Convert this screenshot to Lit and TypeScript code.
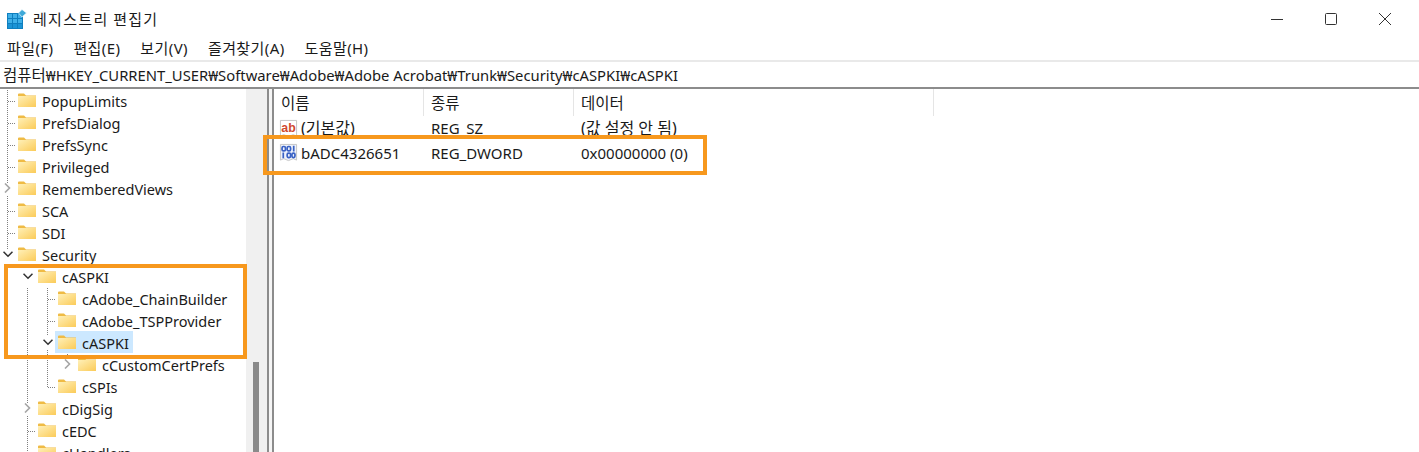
import { LitElement, html, css, svg } from "lit";
import { customElement } from "lit/decorators.js";

const ROWS: { t: string; l: number; e?: "o" | "c"; sel?: boolean }[] = [
  { t: "PopupLimits", l: 0 },
  { t: "PrefsDialog", l: 0 },
  { t: "PrefsSync", l: 0 },
  { t: "Privileged", l: 0 },
  { t: "RememberedViews", l: 0, e: "c" },
  { t: "SCA", l: 0 },
  { t: "SDI", l: 0 },
  { t: "Security", l: 0, e: "o" },
  { t: "cASPKI", l: 1, e: "o" },
  { t: "cAdobe_ChainBuilder", l: 2 },
  { t: "cAdobe_TSPProvider", l: 2 },
  { t: "cASPKI", l: 2, e: "o", sel: true },
  { t: "cCustomCertPrefs", l: 3, e: "c" },
  { t: "cSPIs", l: 2 },
  { t: "cDigSig", l: 1, e: "c" },
  { t: "cEDC", l: 1 },
  { t: "cHandlers", l: 1 },
];

const folder = html`<svg class="folder" width="18" height="14" viewBox="0 0 18 14">
  <defs><linearGradient id="fg" x1="0" y1="0" x2="1" y2="1"><stop offset="0" stop-color="#fff0b8"/><stop offset="1" stop-color="#fbcb58"/></linearGradient></defs>
  <path d="M0 1.5 Q0 .5 1 .5 H6 L8 2.5 H18 V14 H0 Z" fill="#efbb45"/>
  <rect x="0" y="3" width="18" height="11" fill="url(#fg)"/>
</svg>`;

const chevC = html`<svg class="exp" width="10" height="10" viewBox="0 0 10 10"><path d="M2 .5 L6.5 5 L2 9.5" fill="none" stroke="#a6a6a6" stroke-width="1.6"/></svg>`;
const chevO = html`<svg class="exp" width="10" height="10" viewBox="0 0 10 10"><path d="M.5 2.7 L5 7.2 L9.5 2.7" fill="none" stroke="#333" stroke-width="1.6"/></svg>`;

@customElement("app-root")
export class AppRoot extends LitElement {
  static styles = css`
    :host { display: block; width: 1419px; height: 452px; overflow: hidden; position: relative; background: #fff;
      font-family: "Noto Sans", "Noto Sans CJK KR", sans-serif; font-size: 14.5px; color: #1a1a1a; }
    .title { height: 37px; display: flex; align-items: center; }
    .appicon { margin: 0 0 0 7px; }
    .title-text { margin-left: 6px; font-size: 15px; font-family: "Noto Sans CJK KR", sans-serif; letter-spacing: 1.3px; flex: 1; }
    .wc { display: flex; margin-right: 7px; }
    .wc span { width: 54px; height: 36px; display: flex; align-items: center; justify-content: center; }
    .menu { height: 23px; box-sizing: border-box; padding-bottom: 2px; display: flex; align-items: center; padding-left: 7px; gap: 20px; font-size: 15px; letter-spacing: .4px; }
    .addr { border-top: 2px solid #e9e9e9; height: 25px; display: flex; align-items: center; padding-left: 3px; font-size: 14.8px; border-bottom: 2px solid #8c8c8c; white-space: nowrap; }
    .kr { font-size: 15.5px; }
    .main { display: flex; height: 363px; }
    .tree { width: 246px; position: relative; overflow: hidden; }
    .guides { position: absolute; left: 0; top: 0; }
    .row { height: 22px; display: flex; align-items: center; position: relative; white-space: nowrap; }
    .expbox { width: 17px; display: flex; justify-content: center; flex: none; margin-left: -1px; margin-right: 2px; }
    .exp { display: block; }
    .item { display: flex; align-items: center; height: 22px; }
    .item.sel { background: #cce8ff; margin-left: -3px; padding-left: 3px; padding-right: 2px; }
    .folder { flex: none; margin-right: 4px; }
    .label { padding: 0 2px; height: 22px; line-height: 24px; }
    .sb { width: 21px; background: #f0f0f0; position: relative; flex: none; }
    .thumb { position: absolute; left: 7px; width: 6px; top: 273px; bottom: 0; background: #8a8a8a; }
    .split { width: 7px; flex: none; border-left: 2px solid #8c8c8c; border-right: 2px solid #8c8c8c; box-sizing: border-box; background: #f5f5f5; }
    .list { flex: 1; font-size: 15px; }
    .hdr { height: 27px; display: flex; font-size: 15.5px; }
    .hdr div { width: 150px; padding-left: 7px; box-sizing: border-box; border-right: 1px solid #e5e5e5; line-height: 29px; }
    .hdr div:last-child { width: 360px; }
    .lrow { height: 24.5px; display: flex; align-items: center; }
    .c1 { width: 150px; display: flex; align-items: center; padding-left: 5px; box-sizing: border-box; gap: 3px; }
    .c1 svg { flex: none; }
    .c2 { width: 150px; padding-left: 7px; box-sizing: border-box; }
    .c3 { padding-left: 7px; }
    .ko { font-size: 16px; position: relative; top: -1px; }
    .box { position: absolute; border: 4px solid #f7981d; box-sizing: border-box; pointer-events: none; }
    .b1 { left: 4px; top: 264px; width: 243px; height: 95px; }
    .b2 { left: 263px; top: 135px; width: 444px; height: 40px; }
  `;

  guides() {
    const dots = (x1: number, y1: number, x2: number, y2: number) =>
      svg`<line x1=${x1} y1=${y1} x2=${x2} y2=${y2} stroke="#808080" stroke-width="1" stroke-dasharray="1 1"/>`;
    const hs = [101, 123, 145, 167, 211, 233].map((y) => dots(8, y + 0.5, 16, y + 0.5));
    return svg`<svg class="guides" width="246" height="363">
      <g transform="translate(0,-89)">
        ${dots(7.5, 90, 7.5, 184)}
        ${dots(7.5, 196, 7.5, 250)}
        ${hs}
        ${dots(47.5, 288, 47.5, 336)}
        ${dots(47.5, 350, 47.5, 388)}
        ${dots(48, 299.5, 56, 299.5)}
        ${dots(48, 321.5, 56, 321.5)}
        ${dots(48, 387.5, 56, 387.5)}
        ${dots(27.5, 288, 27.5, 404)}
        ${dots(27.5, 416, 27.5, 452)}
        ${dots(28, 431.5, 36, 431.5)}
        ${dots(67.5, 354, 67.5, 358)}
      </g>
    </svg>`;
  }

  render() {
    return html`
      <div class="title">
        <svg class="appicon" width="20" height="20" viewBox="0 0 20 20">
          <rect x="0" y="4" width="16" height="16" fill="#0f7fbf"/>
          <g fill="#3fb0e8">
            <rect x="1" y="5" width="4" height="4"/><rect x="6" y="5" width="4" height="4"/><rect x="11" y="5" width="4" height="4"/>
            <rect x="1" y="10" width="4" height="4"/><rect x="6" y="10" width="4" height="4"/><rect x="11" y="10" width="4" height="4"/>
          </g>
          <g fill="#1b94d6"><rect x="1" y="15" width="4" height="4"/><rect x="6" y="15" width="4" height="4"/><rect x="11" y="15" width="4" height="4"/></g>
          <path d="M15 0.5 L19.5 4 L15 8 L11.5 4 Z" fill="#3fa9d8" stroke="#fff" stroke-width=".6"/>
        </svg>
        <div class="title-text">레지스트리 편집기</div>
        <div class="wc">
          <span><svg width="14" height="14" viewBox="0 0 14 14"><path d="M1 7.5 H13" stroke="#333" stroke-width="1"/></svg></span>
          <span><svg width="14" height="14" viewBox="0 0 14 14"><rect x="1.5" y="1.5" width="11" height="11" rx="1" fill="none" stroke="#333" stroke-width="1"/></svg></span>
          <span><svg width="14" height="14" viewBox="0 0 14 14"><path d="M1 1 L13 13 M13 1 L1 13" stroke="#333" stroke-width="1"/></svg></span>
        </div>
      </div>
      <div class="menu">
        <span>파일(F)</span><span>편집(E)</span><span>보기(V)</span><span>즐겨찾기(A)</span><span>도움말(H)</span>
      </div>
      <div class="addr"><span><span class="kr">컴퓨터</span>₩HKEY_CURRENT_USER₩Software₩Adobe₩Adobe Acrobat₩Trunk₩Security₩cASPKI₩cASPKI</span></div>
      <div class="main">
        <div class="tree">
          ${this.guides()}
          ${ROWS.map(
            (r) => html`<div class="row" style="padding-left:${r.l * 20}px">
              <span class="expbox">${r.e === "o" ? chevO : r.e === "c" ? chevC : ""}</span>
              <span class="item ${r.sel ? "sel" : ""}">${folder}<span class="label">${r.t}</span></span>
            </div>`
          )}
        </div>
        <div class="sb"><div class="thumb"></div></div>
        <div class="split"></div>
        <div class="list">
          <div class="hdr"><div>이름</div><div>종류</div><div>데이터</div></div>
          <div class="lrow">
            <div class="c1">
              <svg width="19" height="19" viewBox="0 0 20 20"><path d="M1.5 1.5 H18.5 V18 L15 16.5 L10 18.5 L5 16.5 L1.5 18 Z" fill="#fff" stroke="#c4c4c4"/><text x="10" y="13.5" font-size="13" font-weight="700" text-anchor="middle" fill="#d0492f" font-family="Liberation Sans">ab</text></svg>
              <span class="ko">(기본값)</span>
            </div>
            <div class="c2">REG_SZ</div><div class="c3"><span class="ko">(값 설정 안 됨)</span></div>
          </div>
          <div class="lrow">
            <div class="c1">
              <svg width="19" height="19" viewBox="0 0 20 20"><path d="M1.5 1.5 H18.5 V18 L15 16.5 L10 18.5 L5 16.5 L1.5 18 Z" fill="#eef2fc" stroke="#c4c4c4"/><g fill="none" stroke="#3a62c4" stroke-width="1.8"><rect x="3.2" y="3.7" width="3.6" height="4.6" rx="1.5"/><rect x="8.6" y="3.7" width="3.6" height="4.6" rx="1.5"/><rect x="8.6" y="10.7" width="3.6" height="4.6" rx="1.5"/><rect x="13.6" y="10.7" width="3.2" height="4.6" rx="1.5"/><path d="M15.5 3 V9 M4.5 10 V16"/></g></svg>
              <span>bADC4326651</span>
            </div>
            <div class="c2">REG_DWORD</div><div class="c3">0x00000000 (0)</div>
          </div>
        </div>
      </div>
      <div class="box b1"></div>
      <div class="box b2"></div>
    `;
  }
}
